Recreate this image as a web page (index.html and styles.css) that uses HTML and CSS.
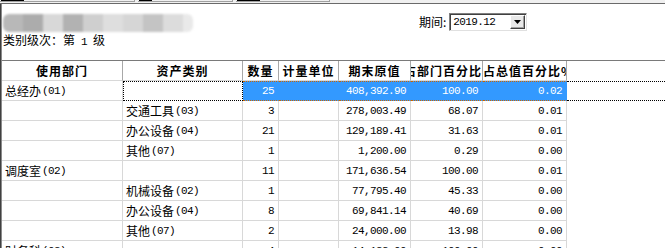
FILE: index.html
```html
<!DOCTYPE html>
<html lang="zh-CN">
<head>
<meta charset="utf-8">
<title>资产类别报表</title>
<link rel="stylesheet" href="styles.css">
</head>
<body>
<div class="toolbar">
  <div class="tseg w1"><span class="tdark"></span></div>
  <div class="tseg w2"><span class="tdark short"></span></div>
  <div class="tseg w3"><span class="tdark"></span></div>
</div>
<div class="topline"></div>
<div class="frame">
  <div class="top">
    <div class="left">
      <div class="blurtitle">
        <span class="b1"></span><span class="b2"></span><span class="b3"></span><span class="b4"></span><span class="b5"></span><span class="b6"></span><span class="b7"></span><span class="b8"></span><span class="b9"></span><span class="b10"></span>
      </div>
      <div class="level">类别级次：第<span class="num"> 1 </span>级</div>
    </div>
    <div class="period">
      <span class="plabel">期间:</span>
      <div class="select">
        <span class="sval">2019.12</span>
        <span class="sbtn"><svg width="7" height="4" viewBox="0 0 7 4"><polygon points="0,0 7,0 3.5,4" fill="#000"/></svg></span>
      </div>
    </div>
  </div>
  <div class="grid">
    <div class="h">使用部门</div>
    <div class="h">资产类别</div>
    <div class="h">数量</div>
    <div class="h">计量单位</div>
    <div class="h">期末原值</div>
    <div class="h hr">占部门百分比</div>
    <div class="h hl">占总值百分比%</div>
    <div class="h last"></div>

    <div class="c">总经办<span class="code">(01)</span></div>
    <div class="c focus"></div>
    <div class="c n sel">25</div>
    <div class="c sel"></div>
    <div class="c n sel">408,392.90</div>
    <div class="c n sel">100.00</div>
    <div class="c n sel">0.02</div>
    <div class="c last focusrow"></div>

    <div class="c"></div><div class="c">交通工具<span class="code">(03)</span></div><div class="c n">3</div><div class="c"></div><div class="c n">278,003.49</div><div class="c n">68.07</div><div class="c n">0.01</div><div class="c last"></div>
    <div class="c"></div><div class="c">办公设备<span class="code">(04)</span></div><div class="c n">21</div><div class="c"></div><div class="c n">129,189.41</div><div class="c n">31.63</div><div class="c n">0.01</div><div class="c last"></div>
    <div class="c"></div><div class="c">其他<span class="code">(07)</span></div><div class="c n">1</div><div class="c"></div><div class="c n">1,200.00</div><div class="c n">0.29</div><div class="c n">0.00</div><div class="c last"></div>
    <div class="c">调度室<span class="code">(02)</span></div><div class="c"></div><div class="c n">11</div><div class="c"></div><div class="c n">171,636.54</div><div class="c n">100.00</div><div class="c n">0.01</div><div class="c last"></div>
    <div class="c"></div><div class="c">机械设备<span class="code">(02)</span></div><div class="c n">1</div><div class="c"></div><div class="c n">77,795.40</div><div class="c n">45.33</div><div class="c n">0.00</div><div class="c last"></div>
    <div class="c"></div><div class="c">办公设备<span class="code">(04)</span></div><div class="c n">8</div><div class="c"></div><div class="c n">69,841.14</div><div class="c n">40.69</div><div class="c n">0.00</div><div class="c last"></div>
    <div class="c"></div><div class="c">其他<span class="code">(07)</span></div><div class="c n">2</div><div class="c"></div><div class="c n">24,000.00</div><div class="c n">13.98</div><div class="c n">0.00</div><div class="c last"></div>
    <div class="c">财务科<span class="code">(03)</span></div><div class="c"></div><div class="c n">4</div><div class="c"></div><div class="c n">14,132.00</div><div class="c n">100.00</div><div class="c n">0.00</div><div class="c last"></div>
  </div>
</div>
</body>
</html>
```
FILE: styles.css
```css
html, body {
  margin: 0;
  padding: 0;
  background: #fff;
}
body {
  width: 665px;
  height: 248px;
  overflow: hidden;
  font-family: "Noto Sans CJK SC", sans-serif;
  font-size: 12px;
  color: #000;
}
.toolbar {
  display: flex;
  height: 3px;
  background: #f0f0f0;
  gap: 3px;
}
.tseg {
  height: 2px;
  box-sizing: border-box;
  border-right: 1px solid #a0a0a0;
  border-bottom: 1px solid #a0a0a0;
  display: flex;
  padding-left: 1px;
}
.w1 { width: 135px; }
.w2 { width: 95px; }
.w3 { width: 94px; }
.tdark {
  display: block;
  width: 23px;
  height: 1px;
  background: #000;
}
.tdark.short { width: 13px; }
.topline {
  height: 1px;
  background: #6a6a6a;
}
.frame {
  border-left: 1px solid #404040;
  box-shadow: inset 1px 0 0 #8a8a8a;
  padding-left: 1px;
  height: 244px;
}
.top {
  display: flex;
  height: 56px;
}
.left {
  width: 416px;
  padding-left: 1px;
}
.blurtitle {
  display: flex;
  margin-top: 10px;
  height: 18px;
  width: 190px;
  filter: blur(1.2px);
  border-radius: 6px;
  overflow: hidden;
}
.blurtitle span { width: 20px; height: 18px; flex: none; }
.b1 { background: #b8b8b8; }
.b2 { background: #acacac; }
.b3 { background: #d8d8d8; }
.b4 { background: #b2b2b2; }
.b5 { background: #cfcfcf; }
.b6 { background: #dedede; }
.b7 { background: #d6d6d6; }
.b8 { background: #c4c4c4; }
.b9 { background: #dcdcdc; }
.b10 { background: #e9e9e9; width: 10px !important; }
.level {
  margin-top: 1px;
  line-height: 14px;
  height: 14px;
  white-space: pre;
}
.num {
  font-family: "Liberation Mono", monospace;
  font-size: 11px;
  letter-spacing: -0.6px;
  white-space: pre;
}
.period {
  display: flex;
  align-items: center;
  gap: 3px;
  margin-top: 9px;
  height: 18px;
}
.plabel { line-height: 18px; }
.select {
  width: 78px;
  height: 18px;
  box-sizing: border-box;
  border-top: 1px solid #808080;
  border-left: 1px solid #808080;
  border-right: 1px solid #e0e0e0;
  border-bottom: 1px solid #e0e0e0;
  box-shadow: inset 1px 1px 0 #404040;
  display: flex;
  align-items: center;
  justify-content: space-between;
  padding: 1px 1px 1px 3px;
  background: #fff;
}
.sval {
  font-family: "Liberation Mono", monospace;
  font-size: 11px;
  letter-spacing: -0.6px;
}
.sbtn {
  width: 15px;
  height: 14px;
  box-sizing: border-box;
  background: #e8e8e8;
  border-top: 1px solid #fff;
  border-left: 1px solid #fff;
  border-right: 1px solid #404040;
  border-bottom: 1px solid #404040;
  box-shadow: inset -1px -1px 0 #a0a0a0;
  display: flex;
  align-items: center;
  justify-content: center;
}
.grid {
  display: grid;
  grid-template-columns: 121px 120px 36px 60px 72px 72px 84px 1fr;
  grid-auto-rows: 20px;
  border-top: 1px solid #7a7a7a;
}
.h, .c {
  box-sizing: border-box;
  display: flex;
  align-items: center;
  overflow: hidden;
  white-space: nowrap;
}
.h {
  justify-content: center;
  font-weight: 700;
  letter-spacing: 1px;
  border-right: 1px solid #a8a8a8;
  border-bottom: 1px solid #d8d8d8;
}
.h.hr { justify-content: flex-end; }
.h.hl { justify-content: flex-start; }
.h.last { border: 0; }
.c {
  border-right: 1px solid #d8d8d8;
  border-bottom: 1px solid #d8d8d8;
  padding: 0 3px;
}
.c.last { border-right: 0; border-bottom: 0; }
.c.n {
  justify-content: flex-end;
  padding-right: 4px;
  font-family: "Liberation Mono", monospace;
  font-size: 11px;
  letter-spacing: -0.6px;
}
.code {
  font-family: "Liberation Mono", monospace;
  font-size: 11px;
  letter-spacing: -0.6px;
  margin-left: 1px;
}
.c.focus {
  border: 1px dotted #000;
}
.c.sel {
  background: #3399ff;
  color: #fff;
  border-top: 1px dotted #cc6600;
  border-bottom: 1px dotted #cc6600;
  border-right: 1px solid #3399ff;
}
.c.focusrow {
  border-top: 1px dotted #000;
  border-bottom: 1px dotted #000;
}
```
